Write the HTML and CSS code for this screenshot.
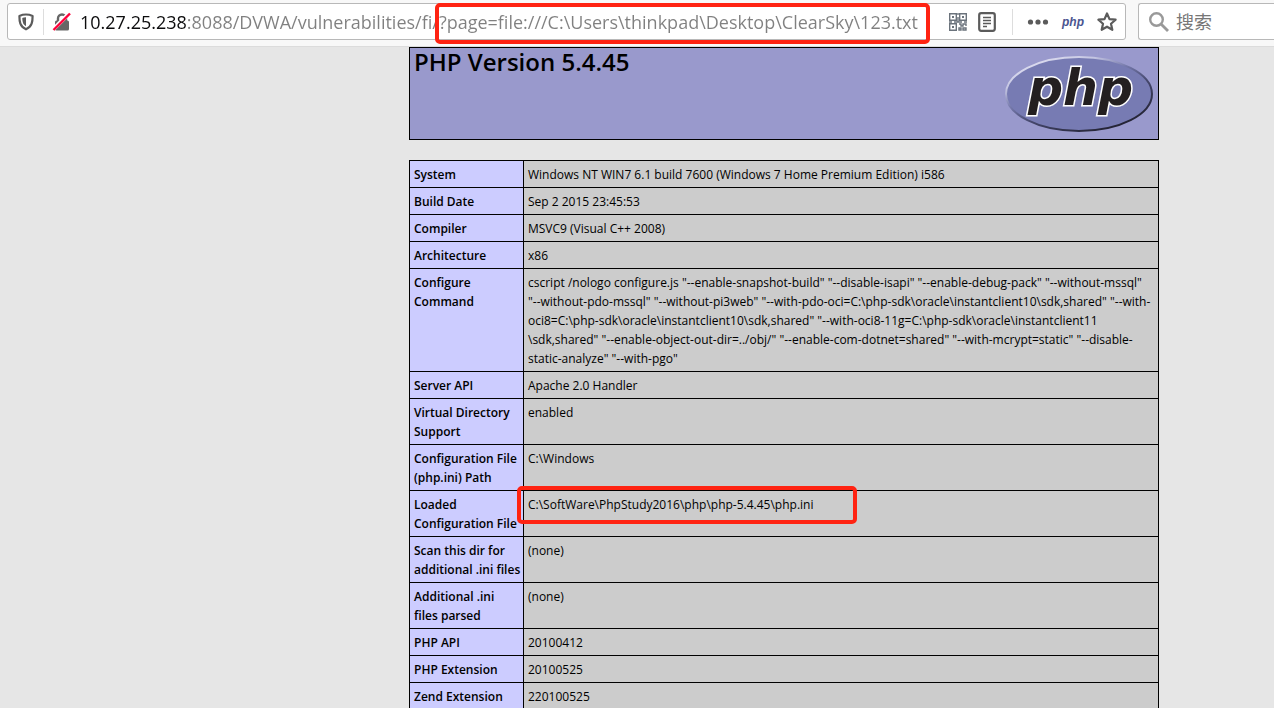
FILE: index.html
```
<!DOCTYPE html>
<html lang="zh-CN">
<head>
<meta charset="utf-8">
<title>phpinfo()</title>
<link rel="stylesheet" href="styles.css">
</head>
<body>
<header class="toolbar">
  <div class="urlbar">
    <button class="tool shield" aria-label="Tracking protection">
      <svg width="18" height="18" viewBox="0 0 18 18"><path d="M9 1.5C6.7 1.5 4.2 2.1 2.4 2.9c0 5.600.4 10.500 6.600 13.400 6.200-2.900 6.600-7.800 6.600-13.400C13.800 2.100 11.300 1.500 9 1.500z" fill="none" stroke="#5b5b5b" stroke-width="2.200" stroke-linejoin="round"/><path d="M9 4.300c-1.500 0-2.700.2-3.700.6.1 3.900.7 6.400 3.700 8.400z" fill="#5b5b5b"/></svg>
    </button>
    <button class="tool lock" aria-label="Connection is not secure">
      <svg width="20" height="20" viewBox="0 0 20 20"><path d="M6 9V6.500a4 4 0 0 1 8 0V9" fill="none" stroke="#666" stroke-width="2.400"/><rect x="3" y="8.500" width="14" height="10" rx="1.500" fill="#666"/><path d="M1 17.500 17.500 1" stroke="#fff" stroke-width="4"/><path d="M1.500 18 18 1.500" stroke="#ff0039" stroke-width="2.400"/></svg>
    </button>
    <input class="address" type="text" aria-label="Address" value="10.27.25.238:8088/DVWA/vulnerabilities/fi/?page=file:///C:\Users\thinkpad\Desktop\ClearSky\123.txt">
    <div class="actions">
      <button class="tool" aria-label="QR code">
        <svg width="18" height="18" viewBox="0 0 18 18" fill="none" stroke="#6b737c" stroke-width="1.400"><path d="M.7.7h6.600v6.600H.7zM10.700.7h6.600v6.600h-6.600zM.7 10.700h6.600v6.600H.7z"/><path d="M3 4h2M13 4h2M3 14h2" stroke-width="2"/><path d="M9 0v2M9 4v5M0 9h3M5 9h8M15 9h3M10 11h2v2h2v-2h3v2M10 15h2v2h-2zM14 15h3v2h-3z"/></svg>
      </button>
      <button class="tool reader" aria-label="Reader view">
        <svg width="18" height="20" viewBox="0 0 18 20" fill="none" stroke="#5b5b5b"><rect x="1.200" y="1.200" width="15.600" height="17.600" rx="2" stroke-width="2.200"/><path d="M5 5.500h8M5 8.500h8M5 11.500h8M5 14.500h4" stroke-width="1.300"/></svg>
      </button>
      <button class="tool dots" aria-label="Page actions">
        <svg width="22" height="8" viewBox="0 0 22 8" fill="#5b5b5b"><circle cx="3.500" cy="4" r="2.600"/><circle cx="11" cy="4" r="2.600"/><circle cx="18.500" cy="4" r="2.600"/></svg>
      </button>
      <button class="tool phpmark">php</button>
      <button class="tool" aria-label="Bookmark">
        <svg width="20" height="20" viewBox="0 0 20 20"><path d="m10 1.500 2.500 5.600 6.100.6-4.600 4.100 1.300 6L10 14.700l-5.300 3.100 1.300-6L1.400 7.700l6.100-.6z" fill="none" stroke="#5b5b5b" stroke-width="2.200" stroke-linejoin="round"/></svg>
      </button>
    </div>
    <span class="mark mark-url"></span>
  </div>
  <label class="search">
    <svg width="22" height="22" viewBox="0 0 22 22" fill="none" stroke="#999" stroke-width="2.400"><circle cx="8.500" cy="8.500" r="6.300"/><path d="m13 13 7 7" stroke-width="2.800"/></svg>
    <input class="query" type="text" placeholder="搜索" aria-label="搜索">
  </label>
</header>
<main class="page">
  <section class="banner">
    <h1 class="title">PHP Version 5.4.45</h1>
    <svg class="logo" width="150" height="80" viewBox="0 0 150 80" role="img" aria-label="PHP logo">
      <defs>
        <linearGradient id="rim" x1="0.150" y1="0" x2="0.850" y2="1">
          <stop offset="0" stop-color="#e6e6f4"/><stop offset=".22" stop-color="#c4c5e2"/><stop offset=".4" stop-color="#7478aa"/><stop offset=".6" stop-color="#45476c"/><stop offset="1" stop-color="#1b1a26"/>
        </linearGradient>
      </defs>
      <ellipse cx="75" cy="40" rx="73" ry="37" fill="#777bb3" stroke="url(#rim)" stroke-width="2"/>
      <text class="logo-text" x="24" y="51">php</text>
    </svg>
  </section>
  <table class="info">
    <tbody>
      <tr><th scope="row">System</th><td>Windows NT WIN7 6.1 build 7600 (Windows 7 Home Premium Edition) i586</td></tr>
      <tr><th scope="row">Build Date</th><td>Sep 2 2015 23:45:53</td></tr>
      <tr><th scope="row">Compiler</th><td>MSVC9 (Visual C++ 2008)</td></tr>
      <tr><th scope="row">Architecture</th><td>x86</td></tr>
      <tr><th scope="row">Configure<br>Command</th><td>cscript /nologo configure.js "--enable-snapshot-build" "--disable-isapi" "--enable-debug-pack" "--without-mssql"<br>"--without-pdo-mssql" "--without-pi3web" "--with-pdo-oci=C:\php-sdk\oracle\instantclient10\sdk,shared" "--with-<br>oci8=C:\php-sdk\oracle\instantclient10\sdk,shared" "--with-oci8-11g=C:\php-sdk\oracle\instantclient11<br>\sdk,shared" "--enable-object-out-dir=../obj/" "--enable-com-dotnet=shared" "--with-mcrypt=static" "--disable-<br>static-analyze" "--with-pgo"</td></tr>
      <tr><th scope="row">Server API</th><td>Apache 2.0 Handler</td></tr>
      <tr><th scope="row">Virtual Directory<br>Support</th><td>enabled</td></tr>
      <tr><th scope="row">Configuration File<br>(php.ini) Path</th><td>C:\Windows</td></tr>
      <tr><th scope="row">Loaded<br>Configuration File</th><td class="marked">C:\SoftWare\PhpStudy2016\php\php-5.4.45\php.ini<span class="mark mark-ini"></span></td></tr>
      <tr><th scope="row">Scan this dir for<br>additional .ini files</th><td>(none)</td></tr>
      <tr><th scope="row">Additional .ini<br>files parsed</th><td>(none)</td></tr>
      <tr><th scope="row">PHP API</th><td>20100412</td></tr>
      <tr><th scope="row">PHP Extension</th><td>20100525</td></tr>
      <tr><th scope="row">Zend Extension</th><td>220100525</td></tr>
    </tbody>
  </table>
</main>
</body>
</html>
```
FILE: styles.css
```
* {
  box-sizing: border-box;
}
html {
  height: 100%;
}
body {
  margin: 0;
  height: 100%;
  display: flex;
  flex-direction: column;
  overflow: hidden;
  background: #e6e6e6;
  color: #000;
  font-family: "Open Sans", "Noto Sans CJK SC", sans-serif;
}
.toolbar {
  flex: none;
  display: flex;
  gap: 12px;
  padding: 3px 0 6px 7px;
  background: #f8f8f8;
  border-bottom: 1px solid #dcdcdc;
}
.urlbar,
.search {
  display: flex;
  align-items: center;
  height: 37px;
  background: #fff;
  border: 1px solid #b8b8b8;
  border-radius: 3px;
}
.urlbar {
  position: relative;
  flex: 1;
}
.search {
  width: 136px;
  gap: 6px;
  padding-left: 9px;
  border-right: 0;
  border-radius: 3px 0 0 3px;
}
.tool {
  display: flex;
  align-items: center;
  justify-content: center;
  padding: 0;
  border: 0;
  background: none;
}
.shield {
  width: 36px;
  height: 26px;
  border-right: 1px solid #ddd;
}
.lock {
  width: 36px;
}
.address,
.query {
  min-width: 0;
  padding: 0;
  border: 0;
  outline: 0;
  font-family: inherit;
  font-size: 18px;
  line-height: 26px;
}
.address {
  flex: 1;
  color: transparent;
  caret-color: #000;
  background: linear-gradient(90deg, #0c0c0d 108px, #808080 108px);
  background-clip: text;
  -webkit-background-clip: text;
}
.query {
  width: 90px;
  background: none;
}
.query::placeholder {
  color: #777;
}
.actions {
  display: flex;
  align-items: center;
  gap: 10px;
  padding-right: 8px;
}
.reader {
  width: 36px;
  height: 26px;
  padding-right: 16px;
  border-right: 1px solid #ddd;
}
.dots {
  margin-left: 4px;
}
.phpmark {
  width: 28px;
  color: #4a5590;
  font: italic bold 12px/16px "Liberation Sans", sans-serif;
}
.mark {
  position: absolute;
  border: 4px solid #ff2312;
  border-radius: 5px;
  pointer-events: none;
}
.mark-url {
  left: 427px;
  top: -1px;
  width: 495px;
  height: 41px;
}
.mark-ini {
  left: -7px;
  top: -5px;
  width: 340px;
  height: 38px;
}
.page {
  flex: 1;
  padding: 0 115px 0 409px;
}
.banner {
  display: flex;
  justify-content: space-between;
  align-items: flex-start;
  height: 93px;
  padding: 0 4px;
  background: #9999cc;
  border: 1px solid #000;
}
.title {
  margin: 0;
  font-size: 24px;
  font-weight: 600;
  line-height: 28px;
}
.logo {
  margin-top: 6px;
  overflow: visible;
}
.logo-text {
  fill: #231f20;
  stroke: #fff;
  stroke-width: 3px;
  paint-order: stroke;
  font: italic bold 49px "DejaVu Sans", sans-serif;
}
.info {
  width: 100%;
  margin-top: 20px;
  border-collapse: collapse;
  table-layout: fixed;
  font-size: 12px;
  line-height: 19px;
}
.info th,
.info td {
  padding: 4px 4px 3px;
  border: 1px solid #000;
  text-align: left;
  vertical-align: top;
  white-space: nowrap;
}
.info th {
  width: 114px;
  font-weight: 600;
  background: #ccccff;
}
.info td {
  background: #cccccc;
}
.info .marked {
  position: relative;
}
```
